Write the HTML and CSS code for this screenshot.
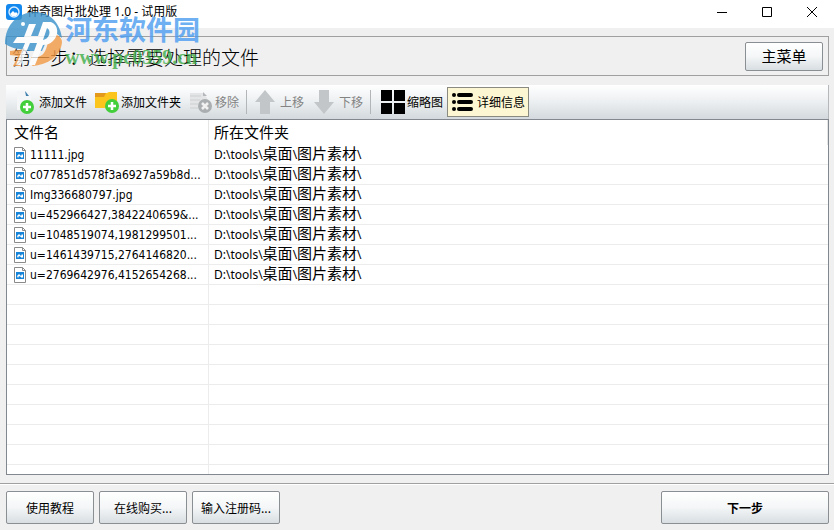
FILE: index.html
```
<!DOCTYPE html>
<html lang="zh-CN">
<head>
  <meta charset="UTF-8">
  <meta name="viewport" content="width=device-width, initial-scale=1.0">
  <title>神奇图片批处理 1.0 - 试用版</title>
  <link rel="stylesheet" href="styles.css">
</head>
<body>

  <svg class="defs" width="0" height="0" aria-hidden="true">
    <symbol id="img-file" viewBox="0 0 12 16">
      <path d="M.5 .5h8l3 3v12h-11z" fill="#fff" stroke="#8a8a8a"/>
      <path d="M8.500 .5v3h3" fill="none" stroke="#8a8a8a"/>
      <path d="M2 5h8v7h-8z" fill="#1583d8"/>
      <path d="M3 9l2-2 2 2 1-2 1 1v2l-1 1-1-1-2-1-1 2z" fill="#fff"/>
    </symbol>
  </svg>

  <header class="titlebar">
    <svg class="app-icon" width="16" height="16" viewBox="0 0 16 16">
      <rect width="16" height="16" rx="3" fill="#1287ee"/>
      <circle cx="8" cy="8" r="5" fill="none" stroke="#d8edff" stroke-width="1.400"/>
      <path d="M4 10l3-3 2 2 1-1 2 2-2 2H6z" fill="#fff"/>
    </svg>
    <span class="title">神奇图片批处理 1.0 - 试用版</span>
    <div class="window-buttons">
      <button aria-label="最小化"><svg width="12" height="12"><path d="M1 6.500h10" /></svg></button>
      <button aria-label="最大化"><svg width="12" height="12"><path d="M1.500 1.500h9v9h-9z" /></svg></button>
      <button aria-label="关闭"><svg width="12" height="12"><path d="M1 1l10 10M11 1L1 11" /></svg></button>
    </div>
  </header>

  <main>
    <section class="step">
      <h1>第一步：选择需要处理的文件</h1>
      <button class="btn btn-menu">主菜单</button>
    </section>

    <nav class="toolbar">
      <button class="tool">
        <svg width="24" height="24" viewBox="0 0 24 24">
          <path d="M4 1h9l5 5v14H4z" fill="#f4f6f7"/>
          <path d="M12 1l4 5h-3z" fill="#3f7fae"/>
          <circle cx="14" cy="17" r="7" fill="#43cf3c"/>
          <path d="M14 13v8M10 17h8" stroke="#fff" stroke-width="2.500"/>
        </svg>
        添加文件
      </button>
      <button class="tool">
        <svg width="24" height="24" viewBox="0 0 24 24">
          <path d="M0 3h12l2-1h8v16H0z" fill="#fcc51d"/>
          <path d="M0 3h11l-2 4H0z" fill="#e39a1c"/>
          <circle cx="17" cy="16" r="7" fill="#43cf3c"/>
          <path d="M17 12v8M13 16h8" stroke="#fff" stroke-width="2.500"/>
        </svg>
        添加文件夹
      </button>
      <button class="tool" disabled>
        <svg width="24" height="24" viewBox="0 0 24 24">
          <path d="M1 3h13l4 5v11H1z" fill="#e3e5e6"/>
          <path d="M1 6h11M1 10h10M1 14h8M1 18h8" stroke="#cdd0d2" stroke-width="1"/>
          <path d="M14 2l4 4h-4z" fill="#b5b8ba"/>
          <circle cx="16" cy="16" r="7" fill="#abaeb0"/>
          <path d="M13 13l6 6M19 13l-6 6" stroke="#f1f1f1" stroke-width="2.500"/>
        </svg>
        移除
      </button>
      <span class="sep"></span>
      <button class="tool tool-move" disabled>
        <svg width="24" height="24" viewBox="0 0 24 24">
          <path d="M12 0l10 12h-5v12H7V12H2z" fill="#c3c6c8"/>
        </svg>
        上移
      </button>
      <button class="tool tool-move" disabled>
        <svg width="24" height="24" viewBox="0 0 24 24">
          <path d="M12 24l10-12h-5V0H7v12H2z" fill="#c3c6c8"/>
        </svg>
        下移
      </button>
      <span class="sep"></span>
      <button class="tool tool-view">
        <svg width="24" height="24" viewBox="0 0 24 24">
          <path d="M0 0h11v11H0zM13 0h11v11H13zM0 13h11v11H0zM13 13h11v11H13z"/>
        </svg>
        缩略图
      </button>
      <button class="tool tool-view active">
        <svg width="24" height="24" viewBox="0 0 24 24">
          <path d="M8 5h12M8 12h12M8 19h12" stroke="#000" stroke-width="4" stroke-linecap="round"/>
          <circle cx="3" cy="5" r="2"/><circle cx="3" cy="12" r="2"/><circle cx="3" cy="19" r="2"/>
        </svg>
        详细信息
      </button>
    </nav>

    <div class="list">
      <table>
        <thead>
          <tr><th class="col-name">文件名</th><th>所在文件夹</th></tr>
        </thead>
        <tbody>
          <tr><td><svg><use href="#img-file"/></svg>11111.jpg</td><td>D:\tools\<b>桌面</b>\<b>图片素材</b>\</td></tr>
          <tr><td><svg><use href="#img-file"/></svg>c077851d578f3a6927a59b8d...</td><td>D:\tools\<b>桌面</b>\<b>图片素材</b>\</td></tr>
          <tr><td><svg><use href="#img-file"/></svg>Img336680797.jpg</td><td>D:\tools\<b>桌面</b>\<b>图片素材</b>\</td></tr>
          <tr><td><svg><use href="#img-file"/></svg>u=452966427,3842240659&amp;...</td><td>D:\tools\<b>桌面</b>\<b>图片素材</b>\</td></tr>
          <tr><td><svg><use href="#img-file"/></svg>u=1048519074,1981299501...</td><td>D:\tools\<b>桌面</b>\<b>图片素材</b>\</td></tr>
          <tr><td><svg><use href="#img-file"/></svg>u=1461439715,2764146820...</td><td>D:\tools\<b>桌面</b>\<b>图片素材</b>\</td></tr>
          <tr><td><svg><use href="#img-file"/></svg>u=2769642976,4152654268...</td><td>D:\tools\<b>桌面</b>\<b>图片素材</b>\</td></tr>
          <tr><td></td><td></td></tr>
          <tr><td></td><td></td></tr>
          <tr><td></td><td></td></tr>
          <tr><td></td><td></td></tr>
          <tr><td></td><td></td></tr>
          <tr><td></td><td></td></tr>
          <tr><td></td><td></td></tr>
          <tr><td></td><td></td></tr>
          <tr><td></td><td></td></tr>
          <tr><td></td><td></td></tr>
        </tbody>
      </table>
    </div>
  </main>

  <footer>
    <button class="btn">使用教程</button>
    <button class="btn">在线购买...</button>
    <button class="btn">输入注册码...</button>
    <button class="btn btn-next">下一步</button>
  </footer>

  <div class="watermark">
    <svg width="58" height="56" viewBox="0 0 58 56">
      <path d="M0 32C0 12 14 0 30 0c14 0 25 10 27 26l-6-5-5-2-9 20H21l-6-2C9 37 4 34 0 32z" fill="#3a92cc"/>
      <path d="M45 21c7 1 12 4 12 9-1 14-14 23-30 24l4-9c6 0 9-4 11-11zM5 39l17-2-7 17H8l5-10-8-1z" fill="#f29a45"/>
      <path d="M24 12h7l-5 12h7l5-14h8c8 3 8 14 2 19-3 3-7 4-10 4l-8 20h-6l8-22h-7l-9 22h-5l9-22H8l4-6h7z" fill="#fff"/>
      <path d="M42 16l-4 12c6-1 9-9 4-12z" fill="#3a92cc"/>
      <circle cx="18" cy="12" r="2" fill="#fff"/>
    </svg>
    <div class="watermark-text">
      <strong>河东软件园</strong>
      <em>www.pc0359.cn</em>
    </div>
  </div>

</body>
</html>
```
FILE: styles.css
```
* {
  box-sizing: border-box;
  margin: 0;
  padding: 0;
}

body {
  display: flex;
  flex-direction: column;
  height: 100vh;
  overflow: hidden;
  background-color: #f0f0f0;
  font-family: "Noto Sans", "Noto Sans CJK SC", sans-serif;
  font-size: 12px;
  color: #000;
}

button {
  font-family: inherit;
  font-size: 12px;
  color: #000;
}

.defs {
  position: absolute;
}

.titlebar {
  display: flex;
  align-items: center;
  height: 28px;
  padding-left: 6px;
  background-color: #fff;
}

.title {
  margin-left: 5px;
  line-height: 24px;
}

.app-icon,
.title {
  margin-bottom: 4px;
}

.window-buttons {
  display: flex;
  margin-left: auto;
  margin-bottom: 4px;
}

.window-buttons button {
  display: flex;
  align-items: center;
  justify-content: center;
  width: 45px;
  height: 24px;
  border: none;
  background: none;
}

.window-buttons path {
  fill: none;
  stroke: #000;
}

main {
  display: flex;
  flex-direction: column;
  flex: 1;
  min-height: 0;
  padding: 8px 5px 8px 6px;
}

.step {
  display: flex;
  align-items: center;
  justify-content: space-between;
  height: 40px;
  padding: 0 5px;
  border: 1px solid #a0a0a0;
}

h1 {
  font-family: "Noto Sans CJK SC", sans-serif;
  font-size: 19px;
  font-weight: 300;
}

.btn {
  width: 88px;
  height: 33px;
  border: 1px solid #8a8f94;
  border-radius: 2px;
  background: linear-gradient(#fff, #f4f6f7 50%, #d8dee2);
  font-family: "Noto Sans CJK SC", sans-serif;
}

.btn-menu {
  width: 78px;
  height: 29px;
  font-size: 15px;
  line-height: 20px;
}

.toolbar {
  display: flex;
  align-items: center;
  height: 34px;
  margin-top: 9px;
  padding-left: 7px;
  border-right: 1px solid #b4b8bb;
  background: linear-gradient(#fff, #eceff1 50%, #d3d9dd);
}

.tool {
  display: flex;
  align-items: center;
  gap: 2px;
  height: 30px;
  margin-right: 8px;
  border: none;
  background: none;
  font-family: "Noto Sans CJK SC", sans-serif;
  line-height: 16px;
}

.tool:disabled {
  color: #838383;
}

.tool-move {
  gap: 3px;
}

.tool-view {
  padding: 0 3px;
  margin-right: 0;
  border: 1px solid transparent;
}

.active {
  border-color: #8a8a80;
  background-color: #fdf6d3;
}

.sep {
  width: 1px;
  height: 24px;
  margin-left: -1px;
  margin-right: 6px;
  background-color: #b2b6b9;
}

.list {
  flex: 1;
  min-height: 0;
  overflow: hidden;
  border: 1px solid #828790;
  background-color: #fff;
}

table {
  width: 100%;
  border-collapse: separate;
  border-spacing: 0;
  table-layout: fixed;
}

th {
  height: 25px;
  padding-left: 7px;
  border-right: 1px solid #e5e5e5;
  text-align: left;
  font-family: "Noto Sans CJK SC", sans-serif;
  font-size: 15px;
  font-weight: 400;
  line-height: 23px;
  vertical-align: top;
}

th:last-child {
  padding-left: 5px;
}

.col-name {
  width: 202px;
}

td {
  height: 20px;
  padding-left: 5px;
  border-bottom: 1px solid #ececec;
  line-height: 19px;
  white-space: nowrap;
}

td:first-child {
  padding-top: 1px;
  padding-left: 7px;
  border-right: 1px solid #ececec;
  font-family: "DejaVu Sans Condensed", "Noto Sans", sans-serif;
  line-height: 18px;
}

td svg {
  width: 12px;
  height: 16px;
  margin-right: 4px;
  vertical-align: -4px;
}

td b {
  font-size: 15px;
  font-weight: 400;
  line-height: 15px;
}

footer {
  display: flex;
  gap: 5px;
  padding: 7px 5px 6px 6px;
  border-top: 1px solid #a0a0a0;
  box-shadow: inset 0 1px #fff;
}

.btn-next {
  width: 168px;
  margin-left: auto;
  font-weight: 700;
}

/* site mark over the top left corner */
.watermark {
  position: absolute;
  top: 12px;
  left: 5px;
  display: flex;
  opacity: 0.8;
  pointer-events: none;
}

.watermark-text {
  display: flex;
  flex-direction: column;
  margin-left: 2px;
}

.watermark strong {
  color: #4a9df0;
  font-family: "Noto Sans CJK SC", sans-serif;
  font-size: 27px;
  line-height: 34px;
}

.watermark em {
  color: #3fae49;
  font-family: "Liberation Serif", serif;
  font-size: 20px;
  font-style: normal;
  font-weight: 700;
  line-height: 22px;
}
```
